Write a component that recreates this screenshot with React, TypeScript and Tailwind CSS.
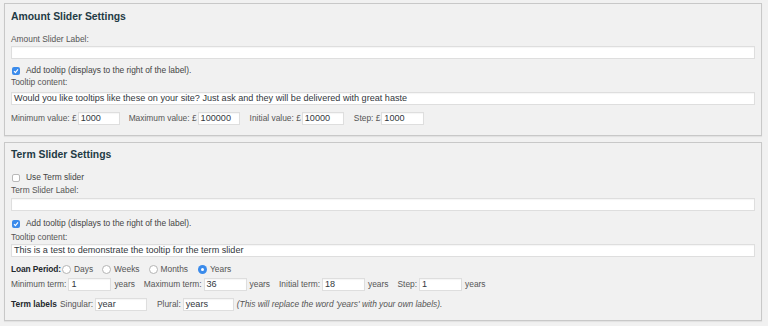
import React from 'react';

const FONT = { fontFamily: '"Liberation Sans", Arial, sans-serif' };

function Checkbox({ checked }: { checked?: boolean }) {
  if (checked) {
    return (
      <span className="w-[8px] h-[8px] rounded-[2px] bg-[#3b8beb] flex items-center justify-center shrink-0">
        <svg width="6" height="6" viewBox="0 0 6 6">
          <path d="M1 3.2 L2.4 4.6 L5 1.4" stroke="#fff" strokeWidth="1.1" fill="none" />
        </svg>
      </span>
    );
  }
  return <span className="w-[8px] h-[8px] rounded-[2px] bg-white border border-[#b9b9b9] shrink-0" />;
}

function Radio({ checked, label }: { checked?: boolean; label: string }) {
  return (
    <span className="flex items-center gap-[3px]">
      {checked ? (
        <span className="w-[9px] h-[9px] rounded-full bg-[#3b8beb] flex items-center justify-center">
          <span className="w-[3px] h-[3px] rounded-full bg-white" />
        </span>
      ) : (
        <span className="w-[9px] h-[9px] rounded-full bg-white border border-[#b4b4b4]" />
      )}
      <span>{label}</span>
    </span>
  );
}

function TextBox({ value, className }: { value?: string; className?: string }) {
  return (
    <div
      className={`h-[13px] bg-white border border-[#dedede] shadow-[inset_0_1px_1px_rgba(0,0,0,0.04)] flex items-center px-[2px] text-[9.1px] text-[#32373c] whitespace-nowrap ${className ?? ''}`}
    >
      {value}
    </div>
  );
}

function Panel({ children, className }: { children: React.ReactNode; className?: string }) {
  return (
    <div className={`mx-[4px] w-[758px] border border-[#c8c8c8] shadow-[0_1px_1px_rgba(0,0,0,0.06)] px-[6px] flex flex-col ${className ?? ''}`}>
      {children}
    </div>
  );
}

export default function App() {
  return (
    <div className="w-[768px] h-[326px] bg-[#f1f1f1] pt-[3px] text-[8.4px] text-[#555]" style={FONT}>
      <Panel className="pt-[6px] pb-[10px]">
        <h3 className="h-[14px] flex items-center text-[10.4px] font-bold text-[#1f3b45]">Amount Slider Settings</h3>
        <div className="h-[12px] mt-[9px] flex items-center">Amount Slider Label:</div>
        <TextBox className="mt-[1px]" />
        <div className="h-[11px] mt-[6px] flex items-center gap-[6px] pl-[1px] text-[#444]">
          <Checkbox checked />
          <span>Add tooltip (displays to the right of the label).</span>
        </div>
        <div className="h-[12px] flex items-center">Tooltip content:</div>
        <TextBox className="mt-[4px]" value="Would you like tooltips like these on your site? Just ask and they will be delivered with great haste" />
        <div className="h-[13px] mt-[7px] flex items-center">
          <span>Minimum value: £</span>
          <TextBox className="w-[42px] ml-[1px]" value="1000" />
          <span className="ml-[9px]">Maximum value: £</span>
          <TextBox className="w-[42px] ml-[1px]" value="100000" />
          <span className="ml-[10px]">Initial value: £</span>
          <TextBox className="w-[42px] ml-[1px]" value="10000" />
          <span className="ml-[10px]">Step: £</span>
          <TextBox className="w-[43px] ml-[1px]" value="1000" />
        </div>
      </Panel>

      <Panel className="mt-[6px] pt-[5px] pb-[9px]">
        <h3 className="h-[14px] flex items-center text-[10.4px] font-bold text-[#1f3b45]">Term Slider Settings</h3>
        <div className="h-[11px] mt-[10px] flex items-center gap-[6px] pl-[1px] text-[#444]">
          <Checkbox />
          <span>Use Term slider</span>
        </div>
        <div className="h-[12px] mt-[1px] flex items-center">Term Slider Label:</div>
        <TextBox className="mt-[2px]" />
        <div className="h-[11px] mt-[7px] flex items-center gap-[6px] pl-[1px] text-[#444]">
          <Checkbox checked />
          <span>Add tooltip (displays to the right of the label).</span>
        </div>
        <div className="h-[12px] mt-[2px] flex items-center">Tooltip content:</div>
        <TextBox className="mt-[1px]" value="This is a test to demonstrate the tooltip for the term slider" />
        <div className="h-[12px] mt-[6px] flex items-center">
          <span className="font-bold text-[#23282d] tracking-[-0.1px]">Loan Period:</span>
          <span className="ml-[1px]"><Radio label="Days" /></span>
          <span className="ml-[9px]"><Radio label="Weeks" /></span>
          <span className="ml-[9px]"><Radio label="Months" /></span>
          <span className="ml-[10px]"><Radio checked label="Years" /></span>
        </div>
        <div className="h-[13px] mt-[3px] flex items-center">
          <span>Minimum term:</span>
          <TextBox className="w-[43px] ml-[2px]" value="1" />
          <span className="ml-[3px]">years</span>
          <span className="ml-[9px]">Maximum term:</span>
          <TextBox className="w-[43px] ml-[2px]" value="36" />
          <span className="ml-[3px]">years</span>
          <span className="ml-[9px]">Initial term:</span>
          <TextBox className="w-[43px] ml-[2px]" value="18" />
          <span className="ml-[3px]">years</span>
          <span className="ml-[9px]">Step:</span>
          <TextBox className="w-[43px] ml-[2px]" value="1" />
          <span className="ml-[3px]">years</span>
        </div>
        <div className="h-[13px] mt-[7px] flex items-center">
          <span className="font-bold text-[#23282d]">Term labels</span>
          <span className="ml-[3px]">Singular:</span>
          <TextBox className="w-[52px] ml-[2px]" value="year" />
          <span className="ml-[10px]">Plural:</span>
          <TextBox className="w-[51px] ml-[2px]" value="years" />
          <span className="ml-[3px] italic">(This will replace the word 'years' with your own labels).</span>
        </div>
      </Panel>
    </div>
  );
}
